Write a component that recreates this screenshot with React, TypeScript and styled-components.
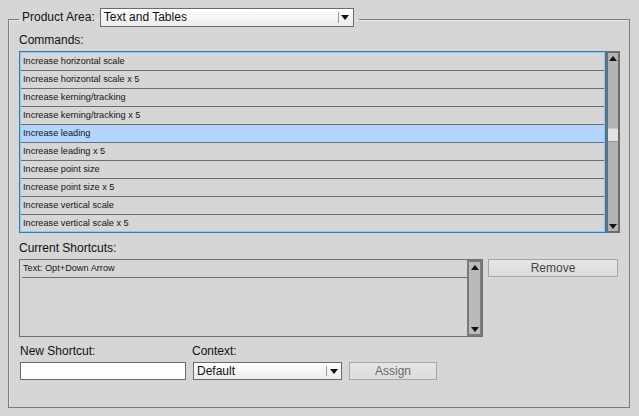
import React from 'react';
import styled, { createGlobalStyle } from 'styled-components';

const GlobalStyle = createGlobalStyle`
  html, body {
    margin: 0;
    padding: 0;
    background: #d6d6d6;
  }
  body {
    font-family: "Liberation Sans", Arial, sans-serif;
    font-size: 12px;
    color: #111;
    width: 639px;
    height: 416px;
    overflow: hidden;
  }
`;

const commands = [
  'Increase horizontal scale',
  'Increase horizontal scale x 5',
  'Increase kerning/tracking',
  'Increase kerning/tracking x 5',
  'Increase leading',
  'Increase leading x 5',
  'Increase point size',
  'Increase point size x 5',
  'Increase vertical scale',
  'Increase vertical scale x 5',
];

const Page = styled.div`
  padding: 8px 0 0 8px;
`;

const Group = styled.fieldset`
  box-sizing: border-box;
  width: 622px;
  min-width: 0;
  margin: 0;
  padding: 3px 9px 27px 10px;
  border: 1px solid #7c7c7c;
  box-shadow: inset 1px 1px 0 #e6e6e6;
`;

const Legend = styled.legend`
  padding: 0 5px 3px 3px;
`;

const LegendRow = styled.div`
  display: flex;
  align-items: center;
  gap: 5px;
`;

const Label = styled.div`
  font-size: 12px;
  line-height: 15px;
  color: #111;
  white-space: nowrap;
`;

const FieldLabel = styled(Label)<{ $top?: number }>`
  margin-top: ${p => p.$top ?? 0}px;
  margin-bottom: 3px;
`;

const Select = styled.div<{ $width: number; $height?: number; $indent?: number }>`
  box-sizing: border-box;
  width: ${p => p.$width}px;
  height: ${p => p.$height ?? 19}px;
  margin-left: ${p => p.$indent ?? 0}px;
  display: flex;
  align-items: center;
  border: 1px solid #6b6b6b;
  background: linear-gradient(#ffffff, #ececec);
  font-size: 12px;
`;

const SelectText = styled.div`
  flex: 1;
  padding-left: 3px;
  line-height: 17px;
  white-space: nowrap;
  overflow: hidden;
`;

const SelectArrow = styled.div`
  width: 15px;
  height: 100%;
  display: flex;
  align-items: center;
  justify-content: center;
  position: relative;
  &::before {
    content: '';
    position: absolute;
    left: 0;
    top: 3px;
    bottom: 3px;
    border-left: 1px solid #9a9a9a;
  }
`;

const ListRow = styled.div`
  display: flex;
  height: 182px;
`;

const CommandList = styled.div`
  box-sizing: border-box;
  flex: 1;
  border: 1px solid #2f7db8;
  box-shadow: inset 0 0 0 1px #8cc8f0;
  padding: 1px;
  overflow: hidden;
`;

const CommandItem = styled.div<{ $selected?: boolean; $last?: boolean }>`
  height: 17px;
  line-height: 17px;
  padding-left: 2px;
  font-size: 9.2px;
  color: #151515;
  background: ${p => (p.$selected ? '#b3d5fd' : 'transparent')};
  border-bottom: ${p => (p.$last ? 'none' : '1px solid #6e6e6e')};
  white-space: nowrap;
`;

const Scroll = styled.div<{ $width: number; $light?: boolean }>`
  box-sizing: border-box;
  width: ${p => p.$width}px;
  border: 2px solid ${p => (p.$light ? '#7a7a7a' : '#6c6c6c')};
  background: ${p => (p.$light ? '#bababa' : '#b3b3b3')};
  display: flex;
  flex-direction: column;
  justify-content: space-between;
  align-items: center;
  padding: 3px 0 2px;
  position: relative;
`;

const Thumb = styled.div`
  position: absolute;
  left: 0;
  right: 0;
  height: 12px;
  background: #e2e2e2;
  border-top: 1px solid #c8c8c8;
  border-bottom: 1px solid #9a9a9a;
`;

const ShortcutRow = styled.div`
  display: flex;
  align-items: flex-start;
  gap: 5px;
`;

const ShortcutBox = styled.div`
  box-sizing: border-box;
  width: 464px;
  height: 78px;
  display: flex;
  border: 1px solid #6f6f6f;
`;

const ShortcutItems = styled.div`
  flex: 1;
  padding-left: 2px;
`;

const ShortcutItem = styled.div`
  height: 17px;
  line-height: 17px;
  padding-left: 1px;
  font-size: 9.2px;
  color: #151515;
  border-bottom: 1px solid #707070;
`;

const Button = styled.div<{ $width: number; $dim?: boolean }>`
  box-sizing: border-box;
  width: ${p => p.$width}px;
  height: 18px;
  line-height: 16px;
  text-align: center;
  font-size: 12px;
  color: ${p => (p.$dim ? '#6a6a6a' : '#444444')};
  border: 1px solid #a6a6a6;
  background: linear-gradient(#e6e6e6, #dcdcdc);
`;

const BottomRow = styled.div`
  display: flex;
  align-items: flex-end;
  padding-left: 1px;
`;

const Field = styled.div<{ $gap?: number }>`
  display: flex;
  flex-direction: column;
  margin-right: ${p => p.$gap ?? 0}px;
`;

const TextInput = styled.div`
  box-sizing: border-box;
  width: 166px;
  height: 18px;
  background: #ffffff;
  border: 1px solid #6b6b6b;
`;

const Up = () => (
  <svg width="8" height="5" viewBox="0 0 8 5">
    <polygon points="0,5 4,0 8,5" fill="#111" />
  </svg>
);

const Down = () => (
  <svg width="8" height="5" viewBox="0 0 8 5">
    <polygon points="0,0 8,0 4,5" fill="#111" />
  </svg>
);

const App = () => (
  <Page>
    <GlobalStyle />
    <Group>
      <Legend>
        <LegendRow>
          <Label>Product Area:</Label>
          <Select $width={254}>
            <SelectText>Text and Tables</SelectText>
            <SelectArrow>
              <Down />
            </SelectArrow>
          </Select>
        </LegendRow>
      </Legend>

      <FieldLabel $top={0}>Commands:</FieldLabel>
      <ListRow>
        <CommandList>
          {commands.map((c, i) => (
            <CommandItem key={c} $selected={i === 4} $last={i === commands.length - 1}>
              {c}
            </CommandItem>
          ))}
        </CommandList>
        <Scroll $width={14}>
          <Up />
          <Thumb style={{ top: 75 }} />
          <Down />
        </Scroll>
      </ListRow>

      <FieldLabel $top={8}>Current Shortcuts:</FieldLabel>
      <ShortcutRow>
        <ShortcutBox>
          <ShortcutItems>
            <ShortcutItem>Text: Opt+Down Arrow</ShortcutItem>
          </ShortcutItems>
          <Scroll $width={15} $light>
            <Up />
            <Down />
          </Scroll>
        </ShortcutBox>
        <Button $width={130}>Remove</Button>
      </ShortcutRow>

      <BottomRow>
        <Field $gap={6}>
          <FieldLabel $top={7}>New Shortcut:</FieldLabel>
          <TextInput />
        </Field>
        <Field $gap={7}>
          <FieldLabel $top={7}>Context:</FieldLabel>
          <Select $width={149} $height={18} $indent={1}>
            <SelectText>Default</SelectText>
            <SelectArrow>
              <Down />
            </SelectArrow>
          </Select>
        </Field>
        <Button $width={88} $dim>
          Assign
        </Button>
      </BottomRow>
    </Group>
  </Page>
);

export default App;
